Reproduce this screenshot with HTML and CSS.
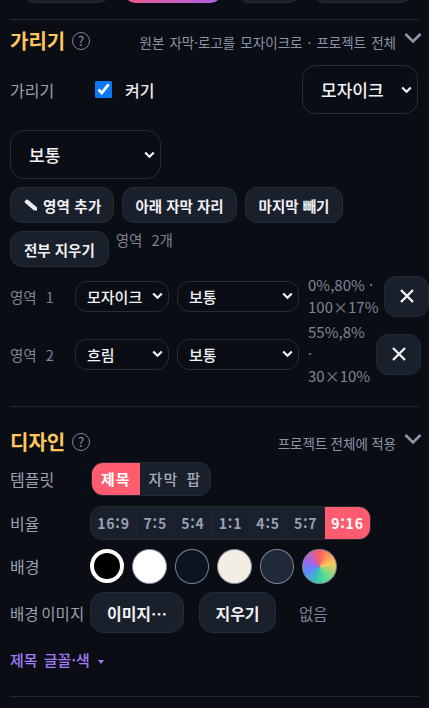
FILE: index.html
```html
<!DOCTYPE html>
<html lang="ko">
<head>
    <meta charset="UTF-8">
    <title>가리기 / 디자인</title>
    <link rel="stylesheet" href="styles.css">
</head>
<body>
    <div class="top-tabs">
        <span class="top-tab tab-a"></span>
        <span class="top-tab tab-pink"></span>
        <span class="top-tab tab-b"></span>
        <span class="top-tab tab-c"></span>
    </div>

    <section class="panel mask-panel">
        <div class="panel-head">
            <h2>가리기</h2>
            <span class="help">?</span>
            <span class="hint">원본 자막·로고를 모자이크로 · 프로젝트 전체</span>
            <svg class="chevron" viewBox="0 0 18 12" width="18" height="12"><path d="M1.5 2 L9 9.5 L16.5 2" fill="none" stroke="#8f97aa" stroke-width="2.6"/></svg>
        </div>

        <div class="mask-toggle">
            <span class="label">가리기</span>
            <label class="check"><input type="checkbox" checked> 켜기</label>
            <select class="big-select type-select"><option>모자이크</option></select>
        </div>
        <select class="big-select level-select"><option>보통</option></select>

        <div class="btn-row">
            <button class="btn btn-add"><svg viewBox="0 0 14 12" width="14" height="12"><path d="M0.5 2.5 L2.5 0.5 L4 0.8 L13 8.5 L13 11.5 L10 11.5 L1 3.8 Z" fill="#e8eaf0"/></svg>영역 추가</button>
            <button class="btn">아래 자막 자리</button>
            <button class="btn btn-wide">마지막 빼기</button>
            <button class="btn btn-wide">전부 지우기</button>
            <span class="count">영역 2개</span>
        </div>

        <div class="region">
            <span class="region-name">영역 1</span>
            <select class="small-select sel-type"><option>모자이크</option></select>
            <select class="small-select sel-level"><option>보통</option></select>
            <span class="region-info wide">0%,80% · 100×17%</span>
            <button class="x-btn"><svg viewBox="0 0 14 14" width="14" height="14"><path d="M1 1 L13 13 M13 1 L1 13" stroke="#eef0f5" stroke-width="2.4"/></svg></button>
        </div>
        <div class="region region-two">
            <span class="region-name">영역 2</span>
            <select class="small-select sel-type"><option>흐림</option></select>
            <select class="small-select sel-level"><option>보통</option></select>
            <span class="region-info">55%,8% · 30×10%</span>
            <button class="x-btn"><svg viewBox="0 0 14 14" width="14" height="14"><path d="M1 1 L13 13 M13 1 L1 13" stroke="#eef0f5" stroke-width="2.4"/></svg></button>
        </div>
    </section>

    <section class="panel design-panel">
        <div class="panel-head">
            <h2>디자인</h2>
            <span class="help">?</span>
            <span class="hint">프로젝트 전체에 적용</span>
            <svg class="chevron" viewBox="0 0 18 12" width="18" height="12"><path d="M1.5 2 L9 9.5 L16.5 2" fill="none" stroke="#8f97aa" stroke-width="2.6"/></svg>
        </div>

        <div class="row row-template">
            <span class="label">템플릿</span>
            <div class="seg">
                <span class="seg-item on">제목</span>
                <span class="seg-item">자막 팝</span>
            </div>
        </div>
        <div class="row row-ratio">
            <span class="label">비율</span>
            <div class="seg seg-ratio">
                <span class="seg-item">16:9</span>
                <span class="seg-item">7:5</span>
                <span class="seg-item">5:4</span>
                <span class="seg-item">1:1</span>
                <span class="seg-item">4:5</span>
                <span class="seg-item">5:7</span>
                <span class="seg-item on">9:16</span>
            </div>
        </div>
        <div class="row row-colors">
            <span class="label">배경</span>
            <div class="swatches">
                <span class="swatch black"></span>
                <span class="swatch white"></span>
                <span class="swatch navy"></span>
                <span class="swatch cream"></span>
                <span class="swatch slate"></span>
                <span class="swatch rainbow"></span>
            </div>
        </div>
        <div class="row row-image">
            <span class="label">배경 이미지</span>
            <button class="btn btn-tall img-btn">이미지…</button>
            <button class="btn btn-tall clear-btn">지우기</button>
            <span class="none">없음</span>
        </div>
        <div class="font-link">제목 글꼴·색 <span class="caret"></span></div>
    </section>
    <div class="bottom-line"></div>
</body>
</html>
```

FILE: styles.css
```css
* {
    box-sizing: border-box;
}
html, body {
    height: 100%;
}
body {
    margin: 0;
    padding: 0 10px;
    overflow: hidden;
    background-color: #0b0d14;
    color: #e8eaf0;
    font-family: "Noto Sans CJK KR", "Noto Sans", sans-serif;
    font-size: 15px;
}
select, button {
    font-family: inherit;
}
select {
    appearance: none;
    background-image: url("data:image/svg+xml,%3Csvg xmlns='http://www.w3.org/2000/svg' viewBox='0 0 11 8'%3E%3Cpath d='M1.2 1.5 L5.5 5.8 L9.8 1.5' fill='none' stroke='%23f2f3f7' stroke-width='2.2'/%3E%3C/svg%3E");
    background-repeat: no-repeat;
    background-position: right 5px center;
    background-size: 11px 8px;
}

/* top row, scrolled almost out of view */
.top-tabs {
    display: flex;
    height: 19px;
}
.top-tab {
    display: block;
    height: 23px;
    margin-top: -20px;
    border: 1px solid #262c3a;
    border-radius: 12px;
    background-color: #1a1f2c;
}
.tab-a { width: 87px; margin-left: 13px; }
.tab-pink {
    width: 98px;
    margin-left: 14px;
    border: none;
    background: linear-gradient(90deg, #f0568c, #a465e8);
}
.tab-b { width: 63px; margin-left: 15px; }
.tab-c { width: 99px; margin-left: 13px; }

.panel {
    border-top: 1px solid #232833;
}
.mask-panel {
    height: 387px;
}
.design-panel {
    height: 290px;
}
.panel-head {
    display: flex;
    align-items: center;
    height: 40px;
    padding-top: 1px;
}
.panel-head h2 {
    margin: 0;
    font-size: 20px;
    font-weight: 700;
    color: #ffc65c;
}
.help {
    width: 18px;
    height: 18px;
    margin-left: 7px;
    border: 1.5px solid #7d8496;
    border-radius: 50%;
    color: #8f97aa;
    font-size: 13px;
    line-height: 15px;
    text-align: center;
}
.hint {
    margin-left: auto;
    margin-top: 3px;
    font-size: 13.5px;
    word-spacing: -0.5px;
    color: #8b93a7;
}
.mask-panel .hint {
    word-spacing: 1.3px;
}
.chevron {
    margin: -6px -3px 0 8px;
}
.label {
    flex: none;
    width: 80px;
    color: #9aa1b2;
    font-size: 16px;
}

.mask-toggle {
    display: flex;
    align-items: center;
    height: 49px;
    margin-top: 5px;
}
.check {
    display: flex;
    align-items: center;
    gap: 13px;
    margin-left: 5px;
    font-size: 16px;
    font-weight: 500;
}
.check input {
    width: 17px;
    height: 17px;
    margin: 0;
    accent-color: #0b78f5;
}
.big-select {
    height: 49px;
    padding: 0 18px;
    border: 1px solid #262c3a;
    border-radius: 14px;
    background-color: #0b0d14;
    color: #f2f3f7;
    font-size: 17px;
    font-weight: 500;
}
.type-select {
    width: 116px;
    margin-left: auto;
    margin-right: 1px;
}
.level-select {
    display: block;
    width: 151px;
    margin-top: 16px;
}

.btn-row {
    display: flex;
    flex-wrap: wrap;
    align-items: flex-start;
    gap: 8px;
    margin-top: 8px;
}
.btn {
    display: inline-flex;
    align-items: center;
    justify-content: center;
    gap: 4px;
    height: 36px;
    padding: 0 12px;
    border: 1px solid #262c3a;
    border-radius: 12px;
    background-color: #1a1f2c;
    color: #f0f1f5;
    font-size: 14.5px;
    font-weight: 700;
}
.btn-add {
    gap: 5px;
    padding: 0 12px 0 13px;
    letter-spacing: 0.2px;
}
.btn-wide {
    padding: 0 13px;
}
.count {
    margin-left: -1px;
    color: #7d8496;
    font-size: 14.5px;
    line-height: 18px;
    word-spacing: 5px;
}

.region {
    display: flex;
    align-items: center;
    margin-top: 7px;
}
.region-two {
    margin-top: 3px;
}
.region-name {
    flex: none;
    width: 65px;
    color: #7d8496;
    font-size: 14.5px;
    word-spacing: 5px;
}
.small-select {
    flex: none;
    height: 31px;
    padding: 0 0 0 11px;
    border: 1px solid #262c3a;
    border-radius: 12px;
    background-color: #0b0d14;
    color: #f2f3f7;
    font-size: 15px;
    font-weight: 500;
}
.sel-type { width: 94px; }
.sel-level { width: 122px; margin-left: 8px; }
.region-info {
    flex: none;
    width: 59px;
    margin: 0 9px;
    color: #7d8496;
    font-size: 15px;
    line-height: 22px;
}
.region-info.wide {
    width: 77px;
    margin-right: -1px;
}
.x-btn {
    display: flex;
    align-items: center;
    justify-content: center;
    flex: none;
    width: 45px;
    height: 41px;
    padding: 0;
    border: 1px solid #232936;
    border-radius: 12px;
    background-color: #1a1f2c;
}

.design-panel .panel-head {
    margin-top: 14px;
}
.row {
    display: flex;
    align-items: center;
}
.row-template {
    margin-top: 1px;
    height: 34px;
}
.row-ratio {
    margin-top: 10px;
    height: 34px;
}
.row-colors {
    margin-top: 9px;
    height: 34px;
}
.row-image {
    margin-top: 9px;
    height: 41px;
}
.seg {
    display: flex;
    height: 34px;
    margin-left: 1px;
    border: 1px solid #232936;
    border-radius: 12px;
    background-color: #1a1f2c;
    overflow: hidden;
}
.seg-item {
    padding: 0 9px;
    color: #a3a9b9;
    font-size: 15px;
    font-weight: 500;
    line-height: 32px;
    letter-spacing: 1px;
    word-spacing: 3px;
}
.seg-item.on {
    background-color: #ff5c6f;
    color: #fff;
    font-weight: 700;
}
.seg-ratio {
    margin-left: 0;
}
.seg-ratio .seg-item {
    width: 37.6px;
    padding: 0;
    border-right: 1px solid #1f2531;
    color: #98a0b2;
    font-size: 14px;
    font-weight: 700;
    letter-spacing: 0.8px;
    text-align: center;
}
.seg-ratio .seg-item:first-child {
    width: 46px;
}
.seg-ratio .seg-item.on {
    width: 45px;
    border-right: none;
    color: #fff;
}

.swatches {
    display: flex;
    gap: 8px;
}
.swatch {
    display: block;
    width: 34.5px;
    height: 35px;
    border: 1px solid #7d8496;
    border-radius: 50%;
}
.black {
    width: 34px;
    height: 34px;
    border: 4px solid #fff;
    background-color: #000;
}
.white { background-color: #fff; }
.navy { background-color: #0b1320; }
.cream { background-color: #f3eee4; }
.slate { background-color: #1f2937; }
.rainbow {
    background: conic-gradient(#ff5c5c, #ffc65c 72deg, #5fe08a 144deg, #35c9b0 190deg, #5c8cff 245deg, #a465e8 300deg, #ff5c5c);
}

.btn-tall {
    height: 41px;
    border-radius: 14px;
    font-size: 16px;
}
.img-btn { width: 94px; }
.row-image .label {
    font-size: 15.5px;
    white-space: nowrap;
    word-spacing: -1.5px;
}
.clear-btn { width: 77px; margin-left: 15px; }
.none {
    margin-left: 23px;
    color: #7d8496;
    font-size: 15.5px;
}
.font-link {
    margin-top: 16px;
    color: #a07cf5;
    font-size: 15px;
    font-weight: 500;
    word-spacing: 2px;
}
.caret {
    display: inline-block;
    margin-left: 2px;
    vertical-align: middle;
    border-left: 3px solid transparent;
    border-right: 3px solid transparent;
    border-top: 4px solid #a07cf5;
}
.bottom-line {
    border-top: 1px solid #232833;
}
```
